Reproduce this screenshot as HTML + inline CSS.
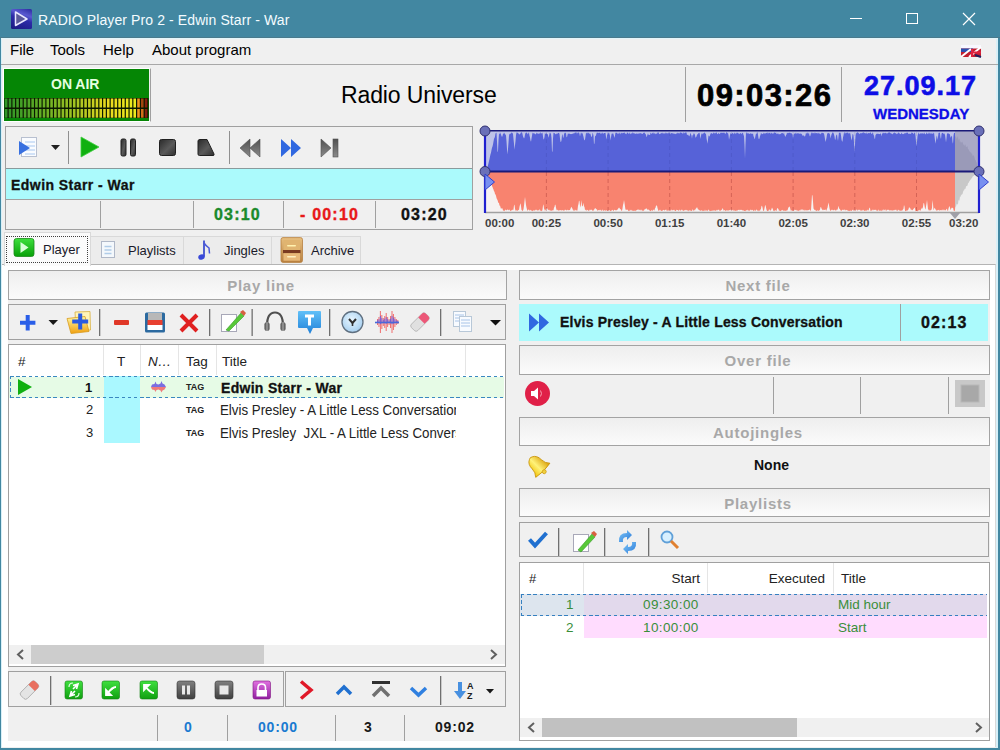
<!DOCTYPE html>
<html><head><meta charset="utf-8">
<style>
*{box-sizing:border-box;margin:0;padding:0}
html,body{width:1000px;height:750px;overflow:hidden;background:#f0f0f0;font-family:"Liberation Sans",sans-serif;color:#000}
.a{position:absolute}
.t{position:absolute;white-space:nowrap}
#title{left:0;top:0;width:1000px;height:38px;background:#4287a1}
#wl{left:0;top:38px;width:1px;height:712px;background:#4287a1}
#wr{left:998px;top:38px;width:2px;height:712px;background:#4287a1}
#wb{left:0;top:748px;width:1000px;height:2px;background:#4287a1}
.hdr{position:absolute;border:1px solid #a3a3a3;background:linear-gradient(#eeeeee,#fbfbfb);color:#a8a8a8;font-weight:bold;font-size:15px;letter-spacing:0.75px;text-align:center;padding-left:7px;padding-top:1px}
.box{position:absolute;border:1px solid #a0a0a0}
.vs{position:absolute;width:1px;background:#a0a0a0}
.hs{position:absolute;height:1px;background:#a0a0a0}
.dh{position:absolute;height:1.3px;background:repeating-linear-gradient(90deg,#3a88c0 0 3.5px,transparent 3.5px 6.2px)}
.dv{position:absolute;width:1.3px;background:repeating-linear-gradient(180deg,#3a88c0 0 3.5px,transparent 3.5px 6.2px)}
</style></head><body>
<div id="title" class="a"></div>
<div id="wl" class="a"></div><div id="wr" class="a"></div><div id="wb" class="a"></div>
<div class="a" style="left:1px;top:264px;width:995px;height:483px;background:#fff;border-top:1px solid #b4b4b4;border-right:1px solid #d8d8d8"></div>
<div class="a" style="left:8px;top:270px;width:982px;height:471px;background:#f0f0f0"></div>
<div class="a" style="left:996px;top:38px;width:2px;height:710px;background:#d8f0f8"></div>
<div class="a" style="left:1px;top:38px;width:1px;height:710px;background:#d8f0f8"></div>


<!-- title content -->
<div class="a" style="left:11px;top:9px;width:20.5px;height:19.5px;background:linear-gradient(20deg,#1a1a80 0%,#2c2ca8 50%,#5a5ad0 70%,#2a2aa0 100%);border-radius:1.5px"></div>
<svg class="a" style="left:11px;top:9px" width="21" height="20"><path d="M4.5 3 L16 10 L4.5 16.5 Z" fill="#5a5a9a" stroke="#e8e8ff" stroke-width="1.5" stroke-linejoin="round"/></svg>
<div class="t" style="left:38px;top:12px;font-size:14px;letter-spacing:0.1px;color:#f4fcff">RADIO Player Pro 2 - Edwin Starr - War</div>
<div class="a" style="left:0;top:37px;width:1000px;height:1px;background:#4a7a8c"></div><div class="a" style="left:1px;top:38px;width:997px;height:1px;background:#e2f6fb"></div>
<div class="a" style="left:850px;top:18px;width:12px;height:1px;background:#fff"></div>
<div class="a" style="left:906px;top:13px;width:12px;height:11px;border:1px solid #fff"></div>
<svg class="a" style="left:962px;top:12px" width="14" height="14"><path d="M1 1L13 13M13 1L1 13" stroke="#fff" stroke-width="1.2"/></svg>

<!-- menu -->
<div class="t" style="left:10px;top:41px;font-size:15px">File</div>
<div class="t" style="left:50px;top:41px;font-size:15px">Tools</div>
<div class="t" style="left:103px;top:41px;font-size:15px">Help</div>
<div class="t" style="left:152px;top:41px;font-size:15px">About program</div>
<div class="hs" style="left:1px;top:64px;width:997px;background:#a8a8a8"></div>
<svg class="a" style="left:960px;top:44px" width="22" height="14">
 <rect x="1" y="1" width="20" height="12" fill="#c02030"/>
 <rect x="1" y="1" width="20" height="3.5" fill="#f8f8ff"/>
 <rect x="1" y="4.5" width="12" height="3.5" fill="#2a50b0"/>
 <path d="M1 13 L11 5 M9 13 L21 3" stroke="#fff" stroke-width="2"/>
 <path d="M12 5 L12 13 M12 8.5 L21 8.5" stroke="#e02040" stroke-width="2"/>
 <path d="M15 11 L21 13" stroke="#202060" stroke-width="2"/>
 
</svg>


<!-- header row -->
<div class="a" style="left:3px;top:68px;width:148px;height:54px;border:1px solid #fff;border-right-color:#a0a0a0;border-bottom-color:#fff"></div>
<div class="a" style="left:4px;top:69px;width:145px;height:52px;background:#058605"></div>
<div class="t" style="left:51px;top:76px;font-size:14px;font-weight:bold;color:#e6ffe0">ON AIR</div>
<svg class="a" style="left:0;top:0" width="160" height="125"><rect x="4.5" y="98" width="144" height="20" fill="#0a1800"/><rect x="4.90" y="98.5" width="2.6" height="9" fill="rgb(50,150,40)"/><rect x="4.90" y="109" width="2.6" height="8.7" fill="rgb(50,150,40)"/><rect x="8.68" y="98.5" width="2.6" height="9" fill="rgb(53,152,39)"/><rect x="8.68" y="109" width="2.6" height="8.7" fill="rgb(53,152,39)"/><rect x="12.46" y="98.5" width="2.6" height="9" fill="rgb(58,155,39)"/><rect x="12.46" y="109" width="2.6" height="8.7" fill="rgb(58,155,39)"/><rect x="16.24" y="98.5" width="2.6" height="9" fill="rgb(63,157,39)"/><rect x="16.24" y="109" width="2.6" height="8.7" fill="rgb(63,157,39)"/><rect x="20.02" y="98.5" width="2.6" height="9" fill="rgb(68,160,38)"/><rect x="20.02" y="109" width="2.6" height="8.7" fill="rgb(68,160,38)"/><rect x="23.80" y="98.5" width="2.6" height="9" fill="rgb(74,162,38)"/><rect x="23.80" y="109" width="2.6" height="8.7" fill="rgb(74,162,38)"/><rect x="27.58" y="98.5" width="2.6" height="9" fill="rgb(80,165,38)"/><rect x="27.58" y="109" width="2.6" height="8.7" fill="rgb(80,165,38)"/><rect x="31.36" y="98.5" width="2.6" height="9" fill="rgb(86,167,37)"/><rect x="31.36" y="109" width="2.6" height="8.7" fill="rgb(86,167,37)"/><rect x="35.14" y="98.5" width="2.6" height="9" fill="rgb(92,170,37)"/><rect x="35.14" y="109" width="2.6" height="8.7" fill="rgb(92,170,37)"/><rect x="38.92" y="98.5" width="2.6" height="9" fill="rgb(99,172,37)"/><rect x="38.92" y="109" width="2.6" height="8.7" fill="rgb(99,172,37)"/><rect x="42.70" y="98.5" width="2.6" height="9" fill="rgb(105,175,37)"/><rect x="42.70" y="109" width="2.6" height="8.7" fill="rgb(105,175,37)"/><rect x="46.48" y="98.5" width="2.6" height="9" fill="rgb(112,177,36)"/><rect x="46.48" y="109" width="2.6" height="8.7" fill="rgb(112,177,36)"/><rect x="50.26" y="98.5" width="2.6" height="9" fill="rgb(119,180,36)"/><rect x="50.26" y="109" width="2.6" height="8.7" fill="rgb(119,180,36)"/><rect x="54.04" y="98.5" width="2.6" height="9" fill="rgb(126,182,36)"/><rect x="54.04" y="109" width="2.6" height="8.7" fill="rgb(126,182,36)"/><rect x="57.82" y="98.5" width="2.6" height="9" fill="rgb(133,185,35)"/><rect x="57.82" y="109" width="2.6" height="8.7" fill="rgb(133,185,35)"/><rect x="61.60" y="98.5" width="2.6" height="9" fill="rgb(140,187,35)"/><rect x="61.60" y="109" width="2.6" height="8.7" fill="rgb(140,187,35)"/><rect x="65.38" y="98.5" width="2.6" height="9" fill="rgb(147,190,35)"/><rect x="65.38" y="109" width="2.6" height="8.7" fill="rgb(147,190,35)"/><rect x="69.16" y="98.5" width="2.6" height="9" fill="rgb(155,192,35)"/><rect x="69.16" y="109" width="2.6" height="8.7" fill="rgb(155,192,35)"/><rect x="72.94" y="98.5" width="2.6" height="9" fill="rgb(162,195,34)"/><rect x="72.94" y="109" width="2.6" height="8.7" fill="rgb(162,195,34)"/><rect x="76.72" y="98.5" width="2.6" height="9" fill="rgb(170,197,34)"/><rect x="76.72" y="109" width="2.6" height="8.7" fill="rgb(170,197,34)"/><rect x="80.50" y="98.5" width="2.6" height="9" fill="rgb(177,200,34)"/><rect x="80.50" y="109" width="2.6" height="8.7" fill="rgb(177,200,34)"/><rect x="84.28" y="98.5" width="2.6" height="9" fill="rgb(185,202,33)"/><rect x="84.28" y="109" width="2.6" height="8.7" fill="rgb(185,202,33)"/><rect x="88.06" y="98.5" width="2.6" height="9" fill="rgb(193,205,33)"/><rect x="88.06" y="109" width="2.6" height="8.7" fill="rgb(193,205,33)"/><rect x="91.84" y="98.5" width="2.6" height="9" fill="rgb(201,207,33)"/><rect x="91.84" y="109" width="2.6" height="8.7" fill="rgb(201,207,33)"/><rect x="95.62" y="98.5" width="2.6" height="9" fill="rgb(209,210,32)"/><rect x="95.62" y="109" width="2.6" height="8.7" fill="rgb(209,210,32)"/><rect x="99.40" y="98.5" width="2.6" height="9" fill="rgb(217,212,32)"/><rect x="99.40" y="109" width="2.6" height="8.7" fill="rgb(217,212,32)"/><rect x="103.18" y="98.5" width="2.6" height="9" fill="rgb(225,215,32)"/><rect x="103.18" y="109" width="2.6" height="8.7" fill="rgb(225,215,32)"/><rect x="106.96" y="98.5" width="2.6" height="9" fill="rgb(233,217,32)"/><rect x="106.96" y="109" width="2.6" height="8.7" fill="rgb(233,217,32)"/><rect x="110.74" y="98.5" width="2.6" height="9" fill="rgb(235,220,31)"/><rect x="110.74" y="109" width="2.6" height="8.7" fill="rgb(235,220,31)"/><rect x="114.52" y="98.5" width="2.6" height="9" fill="rgb(235,222,31)"/><rect x="114.52" y="109" width="2.6" height="8.7" fill="rgb(235,222,31)"/><rect x="118.30" y="98.5" width="2.6" height="9" fill="rgb(235,225,31)"/><rect x="118.30" y="109" width="2.6" height="8.7" fill="rgb(235,225,31)"/><rect x="122.08" y="98.5" width="2.6" height="9" fill="rgb(235,227,30)"/><rect x="122.08" y="109" width="2.6" height="8.7" fill="rgb(235,227,30)"/><rect x="125.86" y="98.5" width="2.6" height="9" fill="rgb(235,230,30)"/><rect x="125.86" y="109" width="2.6" height="8.7" fill="rgb(235,230,30)"/><rect x="129.64" y="98.5" width="2.6" height="9" fill="rgb(235,232,30)"/><rect x="129.64" y="109" width="2.6" height="8.7" fill="rgb(235,232,30)"/><rect x="133.42" y="98.5" width="2.6" height="9" fill="rgb(235,235,30)"/><rect x="133.42" y="109" width="2.6" height="8.7" fill="rgb(235,235,30)"/><rect x="137.20" y="98.5" width="2.6" height="9" fill="rgb(240,150,30)"/><rect x="137.20" y="109" width="2.6" height="8.7" fill="rgb(240,150,30)"/><rect x="140.98" y="98.5" width="2.6" height="9" fill="rgb(160,70,15)"/><rect x="140.98" y="109" width="2.6" height="8.7" fill="rgb(210,110,25)"/><rect x="144.76" y="98.5" width="2.6" height="9" fill="rgb(130,30,10)"/><rect x="144.76" y="109" width="2.6" height="8.7" fill="rgb(130,30,10)"/></svg>
<div class="vs" style="left:685px;top:67px;height:55px"></div>
<div class="vs" style="left:841px;top:67px;height:55px"></div>
<div class="t" style="left:341px;top:82px;font-size:23px;letter-spacing:-0.12px">Radio Universe</div>
<div class="t" style="left:697px;top:78px;font-size:31px;font-weight:bold;letter-spacing:1.4px;-webkit-text-stroke:0.7px #000">09:03:26</div>
<div class="t" style="left:864px;top:71px;font-size:27px;font-weight:bold;color:#0d0de6;letter-spacing:1px;-webkit-text-stroke:0.6px #0d0de6">27.09.17</div>
<div class="t" style="left:873px;top:105px;font-size:15px;font-weight:bold;color:#0d0de6;-webkit-text-stroke:0.3px #0d0de6">WEDNESDAY</div>

<!-- player panel -->
<div class="box" style="left:5px;top:126px;width:468px;height:104px"></div>
<div class="a" style="left:6px;top:168px;width:466px;height:32px;background:#abfafc;border-top:1px solid #8a9a9c;border-bottom:1px solid #a0a0a0"></div>
<div class="t" style="left:11px;top:177px;font-size:14px;font-weight:bold;color:#111;letter-spacing:0.45px;-webkit-text-stroke:0.3px #111">Edwin Starr - War</div>
<div class="vs" style="left:100px;top:201px;height:27px"></div>
<div class="vs" style="left:193px;top:201px;height:27px"></div>
<div class="vs" style="left:283px;top:201px;height:27px"></div>
<div class="vs" style="left:375px;top:201px;height:27px"></div>
<div class="t" style="left:214px;top:206px;font-size:16px;font-weight:bold;color:#1a8a2a;letter-spacing:1.2px;-webkit-text-stroke:0.35px #1a8a2a">03:10</div>
<div class="t" style="left:300px;top:206px;font-size:16px;font-weight:bold;color:#e81818;letter-spacing:1.2px;-webkit-text-stroke:0.35px #e81818">- 00:10</div>
<div class="t" style="left:401px;top:206px;font-size:16px;font-weight:bold;color:#111;letter-spacing:1.2px;-webkit-text-stroke:0.35px #111">03:20</div>
<div class="vs" style="left:68px;top:131px;height:33px;background:#909090"></div>
<div class="vs" style="left:229px;top:131px;height:33px;background:#909090"></div>
<svg class="a" style="left:0;top:120px" width="480" height="50">
 <defs><linearGradient id="dk" x1="0" y1="0" x2="1" y2="1"><stop offset="0" stop-color="#2a2a2a"/><stop offset="0.55" stop-color="#5a5a5a"/><stop offset="1" stop-color="#303030"/></linearGradient>
 <linearGradient id="dg" x1="0" y1="0" x2="0" y2="1"><stop offset="0" stop-color="#505050"/><stop offset="1" stop-color="#8a8a8a"/></linearGradient></defs>
 <rect x="21.5" y="17.5" width="15" height="19" fill="#fafcff" stroke="#b8c0d0"/>
 <path d="M25 22h10M25 26h10M25 30h10M25 34h10" stroke="#a8c8f0" stroke-width="1"/>
 <path d="M19 21 L30 28 L19 35 Z" fill="#3870e0"/>
 <path d="M51 25 L60 25 L55.5 30 Z" fill="#202020"/>
 <path d="M81 17 L99 27 L81 37 Z" fill="#10b010" stroke="#40d040" stroke-width="0.8"/>
 <rect x="121" y="19" width="5" height="17" rx="1.5" fill="url(#dk)" stroke="#202020"/>
 <rect x="130.5" y="19" width="5" height="17" rx="1.5" fill="url(#dk)" stroke="#202020"/>
 <rect x="159.5" y="19.5" width="16" height="16" rx="2" fill="url(#dk)" stroke="#202020"/>
 <path d="M198 21 Q198 19.5 200 19.5 L207 19.5 L214 34 Q214.5 35.5 213 35.5 L199.5 35.5 Q198 35.5 198 34 Z" fill="url(#dk)" stroke="#202020"/>
 <path d="M240 28 L250 19 L250 37 Z M250 28 L260 19 L260 37 Z" fill="url(#dg)" stroke="#505050" stroke-width="0.6"/>
 <path d="M281 19 L291 28 L281 37 Z M291 19 L301 28 L291 37 Z" fill="#3068e0"/>
 <path d="M321 19 L331 28 L321 37 Z" fill="url(#dg)" stroke="#505050" stroke-width="0.6"/><rect x="333" y="19" width="5" height="18" fill="url(#dg)" stroke="#505050" stroke-width="0.6"/>
</svg>

<!-- waveform -->
<svg class="a" style="left:0;top:0" width="1000" height="235">
 <rect x="485" y="131" width="494" height="40.5" fill="#bec3e8"/>
 <rect x="485" y="171.5" width="494" height="41" fill="#f6f2f2"/>
 <path d="M485.5 171.5 L485.5 171.5 486.0 171.5 486.5 171.5 487.0 169.3 487.5 167.3 488.0 165.3 488.5 163.2 489.0 161.0 489.5 159.1 490.0 156.5 490.5 154.2 491.0 152.8 491.5 150.0 492.0 147.8 492.5 146.5 493.0 144.4 493.5 141.6 494.0 138.8 494.5 137.9 495.0 136.4 495.5 133.3 496.0 133.3 496.5 132.6 497.0 141.8 497.5 152.3 498.0 151.0 498.5 140.6 499.0 134.0 499.5 134.2 500.0 132.3 500.5 133.6 501.0 134.4 501.5 136.0 502.0 137.0 502.5 136.1 503.0 133.8 503.5 133.9 504.0 132.6 504.5 133.3 505.0 134.2 505.5 134.4 506.0 135.5 506.5 141.5 507.0 149.2 507.5 154.5 508.0 149.1 508.5 142.4 509.0 135.7 509.5 133.7 510.0 133.9 510.5 133.8 511.0 133.0 511.5 132.2 512.0 133.6 512.5 132.7 513.0 134.1 513.5 139.1 514.0 143.8 514.5 149.8 515.0 145.3 515.5 140.9 516.0 135.1 516.5 132.8 517.0 132.3 517.5 133.0 518.0 132.8 518.5 133.4 519.0 134.3 519.5 134.4 520.0 134.0 520.5 133.5 521.0 132.3 521.5 132.6 522.0 132.6 522.5 134.0 523.0 136.5 523.5 137.4 524.0 138.5 524.5 137.4 525.0 134.8 525.5 133.1 526.0 132.7 526.5 132.5 527.0 133.1 527.5 133.8 528.0 134.4 528.5 132.4 529.0 133.1 529.5 135.8 530.0 137.4 530.5 140.5 531.0 141.8 531.5 138.4 532.0 135.8 532.5 132.6 533.0 133.4 533.5 133.2 534.0 133.2 534.5 133.5 535.0 133.9 535.5 134.4 536.0 133.8 536.5 132.5 537.0 133.9 537.5 133.0 538.0 133.7 538.5 133.5 539.0 133.9 539.5 132.7 540.0 134.2 540.5 132.3 541.0 132.8 541.5 133.6 542.0 133.4 542.5 132.4 543.0 136.4 543.5 139.4 544.0 139.1 544.5 136.9 545.0 132.4 545.5 134.0 546.0 133.9 546.5 133.1 547.0 134.0 547.5 134.0 548.0 135.1 548.5 137.8 549.0 136.1 549.5 133.5 550.0 132.4 550.5 133.4 551.0 133.7 551.5 137.9 552.0 151.4 552.5 151.8 553.0 138.6 553.5 132.8 554.0 133.0 554.5 133.0 555.0 133.8 555.5 134.2 556.0 134.2 556.5 134.0 557.0 132.9 557.5 134.3 558.0 132.7 558.5 133.0 559.0 133.1 559.5 134.0 560.0 138.5 560.5 141.8 561.0 141.9 561.5 140.3 562.0 135.2 562.5 134.1 563.0 137.7 563.5 137.5 564.0 134.3 564.5 132.4 565.0 133.8 565.5 132.4 566.0 132.9 566.5 137.1 567.0 137.3 567.5 134.9 568.0 133.1 568.5 134.3 569.0 133.3 569.5 133.8 570.0 134.2 570.5 134.0 571.0 134.1 571.5 134.0 572.0 134.3 572.5 133.4 573.0 134.0 573.5 133.1 574.0 133.8 574.5 133.0 575.0 132.6 575.5 132.8 576.0 132.3 576.5 132.5 577.0 133.9 577.5 132.3 578.0 133.5 578.5 132.3 579.0 132.6 579.5 134.1 580.0 136.6 580.5 134.0 581.0 132.6 581.5 132.9 582.0 134.0 582.5 132.8 583.0 135.0 583.5 136.8 584.0 139.3 584.5 140.4 585.0 139.4 585.5 136.2 586.0 133.0 586.5 133.6 587.0 132.2 587.5 133.0 588.0 133.8 588.5 132.5 589.0 132.9 589.5 134.1 590.0 133.6 590.5 134.1 591.0 136.0 591.5 136.9 592.0 136.6 592.5 132.8 593.0 133.8 593.5 135.8 594.0 144.2 594.5 143.2 595.0 136.0 595.5 136.2 596.0 134.9 596.5 133.4 597.0 132.5 597.5 132.9 598.0 132.4 598.5 133.2 599.0 133.0 599.5 132.4 600.0 133.2 600.5 134.0 601.0 132.2 601.5 133.8 602.0 133.4 602.5 132.2 603.0 134.0 603.5 133.6 604.0 133.0 604.5 132.9 605.0 133.1 605.5 132.8 606.0 137.1 606.5 139.5 607.0 135.7 607.5 134.0 608.0 132.5 608.5 133.7 609.0 132.6 609.5 134.0 610.0 135.7 610.5 140.5 611.0 137.3 611.5 134.2 612.0 133.3 612.5 133.9 613.0 133.0 613.5 134.3 614.0 136.0 614.5 138.0 615.0 135.6 615.5 132.4 616.0 133.0 616.5 132.4 617.0 133.3 617.5 134.0 618.0 132.5 618.5 134.2 619.0 133.0 619.5 132.5 620.0 134.4 620.5 133.8 621.0 132.6 621.5 133.6 622.0 132.4 622.5 133.5 623.0 132.9 623.5 133.0 624.0 132.5 624.5 132.5 625.0 133.4 625.5 133.4 626.0 134.2 626.5 134.0 627.0 132.5 627.5 132.8 628.0 132.7 628.5 134.0 629.0 133.4 629.5 132.3 630.0 134.4 630.5 133.6 631.0 133.7 631.5 133.0 632.0 134.0 632.5 132.6 633.0 132.5 633.5 133.5 634.0 133.3 634.5 133.4 635.0 133.6 635.5 133.7 636.0 134.3 636.5 133.2 637.0 133.6 637.5 133.9 638.0 133.3 638.5 134.0 639.0 133.1 639.5 133.4 640.0 133.4 640.5 133.2 641.0 132.9 641.5 133.8 642.0 133.8 642.5 133.9 643.0 133.5 643.5 132.5 644.0 133.3 644.5 132.3 645.0 133.4 645.5 133.9 646.0 134.7 646.5 137.3 647.0 136.2 647.5 134.6 648.0 133.2 648.5 134.8 649.0 135.1 649.5 134.7 650.0 135.2 650.5 132.7 651.0 132.9 651.5 134.2 652.0 133.1 652.5 133.5 653.0 132.3 653.5 132.9 654.0 134.3 654.5 133.2 655.0 132.8 655.5 134.2 656.0 134.0 656.5 133.2 657.0 134.1 657.5 132.6 658.0 132.6 658.5 132.3 659.0 133.8 659.5 134.2 660.0 133.8 660.5 133.7 661.0 133.2 661.5 132.7 662.0 133.8 662.5 132.6 663.0 133.7 663.5 133.0 664.0 134.1 664.5 132.7 665.0 134.2 665.5 132.8 666.0 132.4 666.5 133.2 667.0 133.4 667.5 133.5 668.0 132.8 668.5 132.4 669.0 133.9 669.5 132.8 670.0 132.6 670.5 134.4 671.0 133.2 671.5 133.0 672.0 133.3 672.5 133.4 673.0 133.0 673.5 133.9 674.0 133.3 674.5 133.7 675.0 134.3 675.5 133.9 676.0 133.5 676.5 133.2 677.0 133.9 677.5 132.7 678.0 132.7 678.5 133.3 679.0 133.5 679.5 133.5 680.0 132.6 680.5 132.2 681.0 133.2 681.5 132.8 682.0 132.4 682.5 133.5 683.0 133.9 683.5 132.5 684.0 132.3 684.5 133.6 685.0 132.8 685.5 132.4 686.0 132.6 686.5 132.6 687.0 135.1 687.5 134.9 688.0 134.3 688.5 135.8 689.0 135.5 689.5 136.5 690.0 134.5 690.5 132.8 691.0 134.2 691.5 135.5 692.0 138.7 692.5 134.8 693.0 135.7 693.5 133.5 694.0 133.4 694.5 133.8 695.0 135.0 695.5 137.9 696.0 136.8 696.5 136.7 697.0 134.5 697.5 134.2 698.0 134.2 698.5 133.1 699.0 133.0 699.5 132.7 700.0 135.3 700.5 139.0 701.0 136.1 701.5 132.9 702.0 134.4 702.5 134.1 703.0 133.0 703.5 133.7 704.0 132.8 704.5 132.6 705.0 133.1 705.5 133.8 706.0 133.9 706.5 138.2 707.0 140.9 707.5 143.7 708.0 139.3 708.5 135.8 709.0 135.4 709.5 136.7 710.0 135.4 710.5 133.5 711.0 133.6 711.5 132.9 712.0 133.4 712.5 133.8 713.0 133.8 713.5 132.5 714.0 132.8 714.5 133.1 715.0 134.1 715.5 132.8 716.0 132.7 716.5 132.3 717.0 133.4 717.5 134.3 718.0 133.7 718.5 132.7 719.0 133.7 719.5 134.1 720.0 133.6 720.5 133.1 721.0 132.3 721.5 132.9 722.0 132.8 722.5 133.1 723.0 132.6 723.5 132.7 724.0 133.0 724.5 132.5 725.0 133.7 725.5 133.7 726.0 133.1 726.5 132.3 727.0 132.3 727.5 133.5 728.0 132.9 728.5 135.0 729.0 139.7 729.5 137.8 730.0 134.8 730.5 133.6 731.0 133.0 731.5 134.3 732.0 133.6 732.5 133.1 733.0 132.8 733.5 134.1 734.0 134.2 734.5 132.5 735.0 132.9 735.5 134.3 736.0 132.6 736.5 133.7 737.0 132.2 737.5 133.1 738.0 133.3 738.5 133.4 739.0 133.4 739.5 134.3 740.0 133.0 740.5 132.9 741.0 133.7 741.5 134.3 742.0 132.6 742.5 133.3 743.0 133.0 743.5 134.9 744.0 136.1 744.5 144.8 745.0 158.5 745.5 143.3 746.0 132.4 746.5 132.4 747.0 133.9 747.5 132.6 748.0 134.1 748.5 132.8 749.0 134.0 749.5 133.8 750.0 133.8 750.5 132.9 751.0 134.1 751.5 133.4 752.0 133.8 752.5 134.0 753.0 133.2 753.5 136.3 754.0 137.1 754.5 139.2 755.0 138.2 755.5 135.7 756.0 133.6 756.5 134.3 757.0 132.3 757.5 132.5 758.0 134.8 758.5 138.4 759.0 139.1 759.5 138.6 760.0 136.1 760.5 134.9 761.0 132.8 761.5 133.6 762.0 134.4 762.5 133.7 763.0 134.0 763.5 132.6 764.0 134.3 764.5 133.3 765.0 132.9 765.5 133.4 766.0 133.6 766.5 132.7 767.0 133.0 767.5 132.3 768.0 134.2 768.5 132.4 769.0 133.3 769.5 132.6 770.0 133.3 770.5 134.0 771.0 132.3 771.5 133.6 772.0 132.8 772.5 134.1 773.0 133.2 773.5 133.8 774.0 132.3 774.5 132.5 775.0 133.0 775.5 132.9 776.0 132.2 776.5 134.3 777.0 133.4 777.5 133.9 778.0 133.1 778.5 134.0 779.0 134.4 779.5 134.3 780.0 133.8 780.5 134.2 781.0 133.5 781.5 133.1 782.0 133.6 782.5 133.0 783.0 133.0 783.5 134.2 784.0 132.4 784.5 135.0 785.0 136.1 785.5 137.1 786.0 135.2 786.5 134.6 787.0 132.7 787.5 133.1 788.0 133.4 788.5 132.7 789.0 132.9 789.5 132.4 790.0 133.1 790.5 132.7 791.0 133.8 791.5 132.8 792.0 134.3 792.5 134.2 793.0 137.9 793.5 135.3 794.0 133.6 794.5 133.6 795.0 134.1 795.5 133.3 796.0 132.5 796.5 133.7 797.0 133.7 797.5 133.0 798.0 133.5 798.5 133.3 799.0 133.6 799.5 133.5 800.0 134.2 800.5 133.2 801.0 133.8 801.5 133.8 802.0 134.6 802.5 135.5 803.0 135.9 803.5 135.2 804.0 135.5 804.5 136.5 805.0 136.6 805.5 135.1 806.0 132.8 806.5 133.2 807.0 134.1 807.5 132.8 808.0 132.4 808.5 133.9 809.0 132.7 809.5 135.4 810.0 136.4 810.5 135.3 811.0 133.0 811.5 132.3 812.0 134.1 812.5 132.5 813.0 133.1 813.5 133.6 814.0 132.4 814.5 132.7 815.0 134.1 815.5 132.6 816.0 133.1 816.5 132.9 817.0 133.6 817.5 133.5 818.0 132.6 818.5 133.7 819.0 132.5 819.5 134.3 820.0 133.0 820.5 134.4 821.0 133.8 821.5 132.9 822.0 132.5 822.5 133.1 823.0 133.1 823.5 133.3 824.0 133.5 824.5 136.1 825.0 139.0 825.5 141.9 826.0 140.0 826.5 137.7 827.0 134.4 827.5 133.2 828.0 133.1 828.5 133.2 829.0 132.8 829.5 133.7 830.0 134.5 830.5 138.6 831.0 136.6 831.5 134.4 832.0 133.5 832.5 132.4 833.0 132.4 833.5 133.0 834.0 134.4 834.5 136.5 835.0 139.8 835.5 139.4 836.0 135.8 836.5 134.9 837.0 134.3 837.5 138.2 838.0 141.0 838.5 136.6 839.0 132.3 839.5 133.1 840.0 132.7 840.5 132.7 841.0 135.2 841.5 139.6 842.0 141.4 842.5 141.4 843.0 137.5 843.5 135.4 844.0 132.5 844.5 132.2 845.0 134.3 845.5 132.3 846.0 133.4 846.5 132.4 847.0 132.9 847.5 132.5 848.0 132.5 848.5 133.3 849.0 133.9 849.5 133.1 850.0 132.7 850.5 134.4 851.0 137.8 851.5 140.4 852.0 138.2 852.5 134.3 853.0 134.1 853.5 135.4 854.0 142.6 854.5 151.7 855.0 144.3 855.5 136.2 856.0 132.9 856.5 133.6 857.0 132.3 857.5 132.4 858.0 132.4 858.5 132.9 859.0 133.6 859.5 134.3 860.0 133.3 860.5 133.1 861.0 133.8 861.5 133.0 862.0 133.2 862.5 133.1 863.0 132.3 863.5 132.3 864.0 133.4 864.5 132.7 865.0 133.0 865.5 133.3 866.0 133.8 866.5 132.2 867.0 134.3 867.5 133.5 868.0 133.0 868.5 133.0 869.0 133.5 869.5 132.9 870.0 133.3 870.5 132.3 871.0 132.8 871.5 134.0 872.0 134.1 872.5 132.8 873.0 132.4 873.5 135.1 874.0 135.6 874.5 138.6 875.0 138.9 875.5 135.0 876.0 134.6 876.5 133.6 877.0 134.3 877.5 133.5 878.0 133.8 878.5 133.7 879.0 134.2 879.5 133.9 880.0 133.9 880.5 133.2 881.0 133.9 881.5 136.5 882.0 133.5 882.5 133.7 883.0 132.4 883.5 132.9 884.0 133.4 884.5 132.7 885.0 133.4 885.5 132.5 886.0 133.2 886.5 133.2 887.0 133.7 887.5 133.3 888.0 133.1 888.5 132.4 889.0 132.6 889.5 132.6 890.0 132.6 890.5 133.5 891.0 133.1 891.5 134.1 892.0 133.5 892.5 134.4 893.0 133.7 893.5 132.8 894.0 133.5 894.5 132.3 895.0 133.0 895.5 133.2 896.0 133.4 896.5 134.2 897.0 133.3 897.5 133.9 898.0 132.9 898.5 132.3 899.0 133.4 899.5 132.9 900.0 134.3 900.5 134.0 901.0 133.9 901.5 132.6 902.0 133.5 902.5 133.9 903.0 134.2 903.5 133.7 904.0 134.3 904.5 132.8 905.0 133.8 905.5 132.7 906.0 133.4 906.5 132.8 907.0 132.5 907.5 132.8 908.0 132.8 908.5 134.1 909.0 134.1 909.5 133.5 910.0 133.8 910.5 133.7 911.0 133.9 911.5 132.3 912.0 133.0 912.5 132.7 913.0 133.0 913.5 134.3 914.0 133.4 914.5 132.7 915.0 132.4 915.5 135.8 916.0 141.6 916.5 146.1 917.0 141.7 917.5 136.2 918.0 133.7 918.5 132.3 919.0 134.4 919.5 134.1 920.0 133.3 920.5 133.4 921.0 133.4 921.5 133.3 922.0 133.8 922.5 133.3 923.0 133.3 923.5 134.3 924.0 132.5 924.5 132.9 925.0 134.3 925.5 134.3 926.0 134.1 926.5 132.2 927.0 133.5 927.5 133.5 928.0 134.3 928.5 133.3 929.0 132.3 929.5 134.1 930.0 132.3 930.5 134.0 931.0 133.3 931.5 133.9 932.0 132.2 932.5 133.9 933.0 134.0 933.5 132.9 934.0 132.6 934.5 136.4 935.0 140.2 935.5 143.8 936.0 140.2 936.5 136.8 937.0 135.6 937.5 139.9 938.0 137.0 938.5 133.1 939.0 132.8 939.5 132.6 940.0 133.2 940.5 137.4 941.0 138.9 941.5 134.0 942.0 132.7 942.5 133.1 943.0 133.0 943.5 134.2 944.0 133.1 944.5 133.9 945.0 134.7 945.5 138.6 946.0 142.4 946.5 138.3 947.0 133.5 947.5 133.0 948.0 134.2 948.5 132.7 949.0 134.3 949.5 133.8 950.0 134.8 950.5 137.9 951.0 136.4 951.5 136.6 952.0 135.6 952.5 141.9 953.0 143.7 953.5 135.7 954.0 133.0 954.5 132.9 955.0 132.5 L955.0 171.5 Z" fill="#5662d8"/>
 <path d="M485.5 171.5 L485.5 171.5 486.0 171.5 486.5 171.5 487.0 172.8 487.5 174.1 488.0 175.4 488.5 176.7 489.0 177.9 489.5 179.3 490.0 180.4 490.5 181.6 491.0 183.4 491.5 184.3 492.0 186.0 492.5 187.1 493.0 188.6 493.5 189.4 494.0 191.2 494.5 191.8 495.0 193.9 495.5 194.5 496.0 195.8 496.5 197.9 497.0 199.3 497.5 199.9 498.0 201.8 498.5 203.0 499.0 203.0 499.5 205.8 500.0 205.6 500.5 207.2 501.0 208.9 501.5 208.3 502.0 208.3 502.5 208.6 503.0 210.4 503.5 210.5 504.0 211.0 504.5 211.3 505.0 209.7 505.5 209.6 506.0 210.5 506.5 210.3 507.0 209.7 507.5 209.5 508.0 209.7 508.5 210.5 509.0 209.5 509.5 209.8 510.0 210.5 510.5 211.2 511.0 210.4 511.5 210.6 512.0 210.1 512.5 209.4 513.0 210.6 513.5 209.2 514.0 205.5 514.5 204.6 515.0 208.4 515.5 211.3 516.0 209.8 516.5 210.5 517.0 210.9 517.5 211.1 518.0 209.5 518.5 210.3 519.0 210.0 519.5 206.8 520.0 204.8 520.5 203.2 521.0 206.0 521.5 209.9 522.0 210.3 522.5 211.2 523.0 210.5 523.5 209.2 524.0 205.8 524.5 201.3 525.0 197.0 525.5 201.0 526.0 204.9 526.5 207.5 527.0 209.5 527.5 211.2 528.0 209.4 528.5 209.5 529.0 210.3 529.5 210.8 530.0 209.4 530.5 210.4 531.0 209.7 531.5 211.1 532.0 210.4 532.5 211.2 533.0 211.1 533.5 210.0 534.0 210.8 534.5 210.5 535.0 210.2 535.5 209.4 536.0 210.8 536.5 209.5 537.0 210.1 537.5 210.8 538.0 210.2 538.5 210.0 539.0 210.9 539.5 209.3 540.0 209.5 540.5 211.2 541.0 210.4 541.5 211.1 542.0 211.2 542.5 209.6 543.0 205.7 543.5 204.2 544.0 208.5 544.5 209.6 545.0 211.1 545.5 209.7 546.0 209.4 546.5 208.2 547.0 208.5 547.5 208.4 548.0 210.2 548.5 209.5 549.0 210.6 549.5 209.5 550.0 211.1 550.5 210.3 551.0 210.7 551.5 211.1 552.0 210.0 552.5 210.7 553.0 209.9 553.5 210.6 554.0 207.6 554.5 207.1 555.0 204.4 555.5 204.9 556.0 207.7 556.5 209.7 557.0 210.5 557.5 209.5 558.0 210.6 558.5 210.6 559.0 210.5 559.5 210.2 560.0 210.2 560.5 210.2 561.0 209.8 561.5 210.7 562.0 210.3 562.5 210.2 563.0 210.0 563.5 211.2 564.0 209.7 564.5 211.1 565.0 209.5 565.5 210.0 566.0 209.8 566.5 210.8 567.0 209.8 567.5 209.8 568.0 210.6 568.5 210.0 569.0 210.2 569.5 209.9 570.0 210.1 570.5 208.7 571.0 207.6 571.5 206.8 572.0 208.1 572.5 208.8 573.0 210.2 573.5 211.0 574.0 209.3 574.5 211.0 575.0 210.5 575.5 209.4 576.0 210.7 576.5 210.0 577.0 210.9 577.5 209.9 578.0 205.7 578.5 204.0 579.0 200.6 579.5 201.3 580.0 205.5 580.5 207.6 581.0 204.0 581.5 199.9 582.0 206.2 582.5 206.3 583.0 205.3 583.5 202.8 584.0 206.3 584.5 206.9 585.0 210.1 585.5 210.3 586.0 209.3 586.5 210.8 587.0 210.4 587.5 209.7 588.0 210.1 588.5 211.0 589.0 210.8 589.5 210.3 590.0 209.3 590.5 210.2 591.0 209.8 591.5 209.7 592.0 209.7 592.5 210.8 593.0 211.1 593.5 210.4 594.0 209.5 594.5 209.2 595.0 208.0 595.5 208.3 596.0 209.0 596.5 209.2 597.0 209.5 597.5 210.7 598.0 210.7 598.5 209.9 599.0 209.9 599.5 210.5 600.0 209.4 600.5 210.0 601.0 210.5 601.5 210.8 602.0 210.4 602.5 209.3 603.0 210.9 603.5 210.7 604.0 210.2 604.5 210.6 605.0 210.0 605.5 210.9 606.0 210.6 606.5 210.2 607.0 210.6 607.5 211.1 608.0 211.1 608.5 209.9 609.0 210.5 609.5 210.1 610.0 210.8 610.5 211.1 611.0 211.2 611.5 210.4 612.0 210.0 612.5 209.7 613.0 210.6 613.5 211.3 614.0 209.9 614.5 209.7 615.0 210.1 615.5 210.6 616.0 210.0 616.5 210.5 617.0 209.7 617.5 209.8 618.0 208.7 618.5 208.3 619.0 207.6 619.5 207.9 620.0 209.1 620.5 209.3 621.0 209.4 621.5 210.9 622.0 210.8 622.5 208.4 623.0 205.1 623.5 203.2 624.0 200.0 624.5 203.0 625.0 206.6 625.5 210.0 626.0 209.3 626.5 210.1 627.0 209.7 627.5 209.5 628.0 210.2 628.5 210.9 629.0 211.1 629.5 210.9 630.0 209.4 630.5 210.7 631.0 209.8 631.5 210.1 632.0 211.3 632.5 210.4 633.0 210.5 633.5 211.0 634.0 210.8 634.5 210.6 635.0 211.2 635.5 211.0 636.0 210.1 636.5 210.5 637.0 209.9 637.5 209.8 638.0 209.3 638.5 209.6 639.0 210.4 639.5 209.5 640.0 210.2 640.5 209.5 641.0 211.2 641.5 209.5 642.0 210.1 642.5 210.7 643.0 211.2 643.5 210.4 644.0 210.5 644.5 209.3 645.0 209.6 645.5 208.6 646.0 209.2 646.5 208.1 647.0 208.9 647.5 209.7 648.0 209.8 648.5 209.5 649.0 209.7 649.5 210.2 650.0 211.3 650.5 210.7 651.0 211.2 651.5 209.7 652.0 210.6 652.5 211.2 653.0 209.5 653.5 210.3 654.0 209.3 654.5 210.9 655.0 208.2 655.5 207.8 656.0 205.7 656.5 205.4 657.0 205.5 657.5 208.1 658.0 209.4 658.5 211.1 659.0 210.7 659.5 209.6 660.0 211.0 660.5 209.4 661.0 211.1 661.5 210.7 662.0 210.9 662.5 210.8 663.0 209.7 663.5 210.0 664.0 210.1 664.5 210.7 665.0 210.0 665.5 210.0 666.0 209.3 666.5 210.2 667.0 211.2 667.5 210.7 668.0 209.7 668.5 210.7 669.0 210.8 669.5 210.2 670.0 209.5 670.5 211.2 671.0 209.8 671.5 209.4 672.0 210.9 672.5 210.0 673.0 210.0 673.5 210.3 674.0 209.6 674.5 210.3 675.0 211.0 675.5 211.0 676.0 210.8 676.5 209.8 677.0 209.7 677.5 210.3 678.0 210.1 678.5 211.2 679.0 209.9 679.5 209.6 680.0 211.0 680.5 210.3 681.0 210.4 681.5 209.7 682.0 209.5 682.5 210.2 683.0 210.8 683.5 210.7 684.0 210.7 684.5 210.2 685.0 210.1 685.5 209.7 686.0 210.8 686.5 209.9 687.0 209.7 687.5 210.5 688.0 210.9 688.5 211.2 689.0 209.8 689.5 211.0 690.0 209.8 690.5 210.8 691.0 211.0 691.5 210.7 692.0 211.1 692.5 209.3 693.0 209.8 693.5 210.8 694.0 210.8 694.5 209.4 695.0 210.6 695.5 209.0 696.0 208.4 696.5 208.0 697.0 206.9 697.5 208.2 698.0 209.5 698.5 209.6 699.0 209.7 699.5 210.6 700.0 210.2 700.5 210.9 701.0 210.4 701.5 210.4 702.0 209.9 702.5 210.9 703.0 211.2 703.5 210.6 704.0 211.3 704.5 210.8 705.0 209.5 705.5 210.8 706.0 211.0 706.5 210.6 707.0 209.9 707.5 211.3 708.0 210.5 708.5 209.5 709.0 209.8 709.5 211.2 710.0 210.8 710.5 211.0 711.0 211.2 711.5 210.5 712.0 211.0 712.5 210.8 713.0 210.0 713.5 210.9 714.0 209.9 714.5 210.5 715.0 210.8 715.5 210.6 716.0 211.2 716.5 210.0 717.0 209.7 717.5 210.7 718.0 209.5 718.5 209.9 719.0 209.4 719.5 210.8 720.0 211.1 720.5 210.5 721.0 210.5 721.5 209.8 722.0 209.7 722.5 208.2 723.0 208.6 723.5 210.6 724.0 210.5 724.5 210.1 725.0 210.2 725.5 211.3 726.0 210.6 726.5 210.5 727.0 210.3 727.5 210.4 728.0 210.8 728.5 210.6 729.0 210.2 729.5 210.0 730.0 210.4 730.5 209.4 731.0 210.1 731.5 209.8 732.0 210.1 732.5 210.5 733.0 209.6 733.5 210.5 734.0 211.2 734.5 210.3 735.0 210.6 735.5 211.0 736.0 210.8 736.5 210.8 737.0 210.2 737.5 210.8 738.0 210.0 738.5 210.1 739.0 209.6 739.5 210.6 740.0 209.5 740.5 209.9 741.0 209.9 741.5 209.7 742.0 210.1 742.5 210.2 743.0 210.7 743.5 210.2 744.0 210.8 744.5 210.9 745.0 211.0 745.5 211.2 746.0 209.9 746.5 210.4 747.0 210.3 747.5 209.6 748.0 211.2 748.5 210.3 749.0 210.5 749.5 210.8 750.0 210.6 750.5 209.8 751.0 209.6 751.5 210.5 752.0 210.1 752.5 209.7 753.0 210.5 753.5 210.8 754.0 211.3 754.5 209.4 755.0 211.0 755.5 210.5 756.0 210.5 756.5 209.3 757.0 209.9 757.5 211.2 758.0 209.8 758.5 211.1 759.0 211.2 759.5 210.3 760.0 210.7 760.5 209.6 761.0 208.8 761.5 206.0 762.0 205.8 762.5 207.5 763.0 210.3 763.5 211.1 764.0 210.8 764.5 208.3 765.0 205.8 765.5 205.1 766.0 207.6 766.5 209.8 767.0 210.8 767.5 211.2 768.0 210.7 768.5 210.9 769.0 209.3 769.5 209.6 770.0 210.5 770.5 210.5 771.0 210.2 771.5 209.1 772.0 207.5 772.5 208.5 773.0 209.6 773.5 210.9 774.0 211.0 774.5 211.2 775.0 209.8 775.5 210.3 776.0 210.9 776.5 211.0 777.0 208.7 777.5 208.1 778.0 208.4 778.5 209.2 779.0 211.1 779.5 210.5 780.0 210.8 780.5 211.3 781.0 210.8 781.5 210.6 782.0 209.7 782.5 210.0 783.0 210.7 783.5 210.7 784.0 210.6 784.5 210.9 785.0 210.2 785.5 210.9 786.0 211.0 786.5 210.4 787.0 210.3 787.5 210.6 788.0 208.4 788.5 207.5 789.0 206.8 789.5 206.6 790.0 207.6 790.5 209.7 791.0 210.9 791.5 209.9 792.0 210.7 792.5 210.6 793.0 211.0 793.5 210.5 794.0 210.9 794.5 209.5 795.0 210.0 795.5 210.2 796.0 209.6 796.5 210.4 797.0 210.5 797.5 210.8 798.0 210.2 798.5 211.2 799.0 210.4 799.5 210.1 800.0 211.0 800.5 209.3 801.0 210.7 801.5 209.3 802.0 209.6 802.5 209.3 803.0 210.8 803.5 210.0 804.0 209.6 804.5 210.3 805.0 211.2 805.5 209.9 806.0 209.7 806.5 210.2 807.0 210.9 807.5 210.0 808.0 210.2 808.5 210.3 809.0 209.7 809.5 209.8 810.0 209.5 810.5 211.0 811.0 210.6 811.5 202.9 812.0 194.8 812.5 195.8 813.0 201.6 813.5 208.6 814.0 209.3 814.5 210.0 815.0 209.8 815.5 210.0 816.0 211.3 816.5 210.7 817.0 210.7 817.5 209.9 818.0 211.0 818.5 210.4 819.0 211.1 819.5 210.1 820.0 209.8 820.5 207.3 821.0 207.1 821.5 208.4 822.0 209.4 822.5 209.7 823.0 210.4 823.5 209.4 824.0 209.9 824.5 210.1 825.0 209.6 825.5 209.6 826.0 210.4 826.5 210.5 827.0 208.8 827.5 207.7 828.0 205.1 828.5 202.5 829.0 205.2 829.5 208.3 830.0 210.6 830.5 210.8 831.0 210.6 831.5 209.6 832.0 210.2 832.5 209.5 833.0 210.6 833.5 209.9 834.0 210.6 834.5 209.4 835.0 210.0 835.5 210.6 836.0 210.7 836.5 210.1 837.0 209.3 837.5 209.9 838.0 208.0 838.5 205.8 839.0 207.9 839.5 208.9 840.0 209.3 840.5 210.6 841.0 210.5 841.5 211.1 842.0 210.0 842.5 209.8 843.0 209.7 843.5 209.7 844.0 210.4 844.5 209.6 845.0 209.5 845.5 210.6 846.0 210.2 846.5 209.7 847.0 210.3 847.5 210.2 848.0 211.1 848.5 210.7 849.0 210.8 849.5 211.2 850.0 210.4 850.5 210.4 851.0 211.1 851.5 211.0 852.0 210.3 852.5 210.1 853.0 209.4 853.5 211.3 854.0 209.7 854.5 209.9 855.0 210.2 855.5 211.1 856.0 209.4 856.5 209.6 857.0 210.5 857.5 210.8 858.0 209.5 858.5 210.3 859.0 209.5 859.5 210.2 860.0 209.5 860.5 210.7 861.0 210.8 861.5 210.4 862.0 210.6 862.5 210.4 863.0 209.6 863.5 210.2 864.0 210.5 864.5 211.1 865.0 210.7 865.5 210.8 866.0 210.3 866.5 210.5 867.0 211.3 867.5 209.4 868.0 210.1 868.5 210.7 869.0 208.9 869.5 207.4 870.0 208.3 870.5 211.1 871.0 210.8 871.5 210.4 872.0 210.5 872.5 209.9 873.0 209.3 873.5 210.6 874.0 209.7 874.5 210.0 875.0 209.8 875.5 210.1 876.0 209.4 876.5 211.3 877.0 209.8 877.5 211.3 878.0 210.5 878.5 209.3 879.0 211.2 879.5 210.4 880.0 210.5 880.5 210.4 881.0 210.7 881.5 211.2 882.0 209.6 882.5 210.2 883.0 211.1 883.5 209.4 884.0 209.5 884.5 210.5 885.0 209.6 885.5 209.6 886.0 211.2 886.5 210.5 887.0 209.4 887.5 209.9 888.0 209.7 888.5 209.8 889.0 210.1 889.5 210.6 890.0 210.6 890.5 210.3 891.0 210.2 891.5 210.6 892.0 210.3 892.5 210.6 893.0 210.8 893.5 209.8 894.0 210.8 894.5 209.7 895.0 209.9 895.5 210.1 896.0 209.3 896.5 210.4 897.0 210.8 897.5 211.1 898.0 209.6 898.5 209.9 899.0 210.2 899.5 211.0 900.0 209.8 900.5 211.1 901.0 210.9 901.5 210.2 902.0 211.1 902.5 210.1 903.0 209.5 903.5 208.7 904.0 205.0 904.5 206.5 905.0 210.8 905.5 211.3 906.0 210.8 906.5 210.8 907.0 210.3 907.5 210.7 908.0 209.7 908.5 209.6 909.0 207.3 909.5 207.4 910.0 208.3 910.5 208.4 911.0 210.6 911.5 209.4 912.0 209.7 912.5 210.4 913.0 209.5 913.5 209.0 914.0 208.3 914.5 207.6 915.0 208.6 915.5 211.2 916.0 211.1 916.5 211.1 917.0 210.7 917.5 211.2 918.0 211.2 918.5 210.2 919.0 209.9 919.5 209.7 920.0 211.1 920.5 210.5 921.0 209.3 921.5 208.8 922.0 207.5 922.5 209.1 923.0 206.8 923.5 203.3 924.0 203.1 924.5 205.7 925.0 208.6 925.5 209.4 926.0 206.6 926.5 203.5 927.0 200.0 927.5 204.2 928.0 209.2 928.5 209.4 929.0 211.1 929.5 209.4 930.0 211.2 930.5 209.9 931.0 210.1 931.5 209.7 932.0 207.8 932.5 199.9 933.0 204.1 933.5 210.3 934.0 209.2 934.5 207.7 935.0 208.2 935.5 209.8 936.0 209.5 936.5 211.0 937.0 210.3 937.5 210.6 938.0 210.0 938.5 210.3 939.0 209.5 939.5 210.8 940.0 210.6 940.5 210.0 941.0 210.2 941.5 209.8 942.0 210.9 942.5 209.3 943.0 210.6 943.5 209.3 944.0 211.0 944.5 209.7 945.0 209.7 945.5 210.7 946.0 209.7 946.5 208.7 947.0 209.0 947.5 210.7 948.0 211.0 948.5 208.5 949.0 207.0 949.5 205.9 950.0 207.7 950.5 210.2 951.0 209.0 951.5 207.9 952.0 207.5 952.5 208.2 953.0 207.5 953.5 210.0 954.0 211.2 954.5 210.9 955.0 210.2 L955.0 171.5 Z" fill="#f8836f"/>
 <line x1="546.4" y1="132" x2="546.4" y2="171" stroke="rgba(20,20,90,0.1)" stroke-width="1" stroke-dasharray="4 3"/><line x1="546.4" y1="172" x2="546.4" y2="212" stroke="rgba(150,40,40,0.35)" stroke-width="1" stroke-dasharray="4 3"/><line x1="608.1" y1="132" x2="608.1" y2="171" stroke="rgba(20,20,90,0.1)" stroke-width="1" stroke-dasharray="4 3"/><line x1="608.1" y1="172" x2="608.1" y2="212" stroke="rgba(150,40,40,0.35)" stroke-width="1" stroke-dasharray="4 3"/><line x1="669.7" y1="132" x2="669.7" y2="171" stroke="rgba(20,20,90,0.1)" stroke-width="1" stroke-dasharray="4 3"/><line x1="669.7" y1="172" x2="669.7" y2="212" stroke="rgba(150,40,40,0.35)" stroke-width="1" stroke-dasharray="4 3"/><line x1="731.4" y1="132" x2="731.4" y2="171" stroke="rgba(20,20,90,0.1)" stroke-width="1" stroke-dasharray="4 3"/><line x1="731.4" y1="172" x2="731.4" y2="212" stroke="rgba(150,40,40,0.35)" stroke-width="1" stroke-dasharray="4 3"/><line x1="793.1" y1="132" x2="793.1" y2="171" stroke="rgba(20,20,90,0.1)" stroke-width="1" stroke-dasharray="4 3"/><line x1="793.1" y1="172" x2="793.1" y2="212" stroke="rgba(150,40,40,0.35)" stroke-width="1" stroke-dasharray="4 3"/><line x1="854.8" y1="132" x2="854.8" y2="171" stroke="rgba(20,20,90,0.1)" stroke-width="1" stroke-dasharray="4 3"/><line x1="854.8" y1="172" x2="854.8" y2="212" stroke="rgba(150,40,40,0.35)" stroke-width="1" stroke-dasharray="4 3"/><line x1="916.5" y1="132" x2="916.5" y2="171" stroke="rgba(20,20,90,0.1)" stroke-width="1" stroke-dasharray="4 3"/><line x1="916.5" y1="172" x2="916.5" y2="212" stroke="rgba(150,40,40,0.35)" stroke-width="1" stroke-dasharray="4 3"/>
 <rect x="955" y="131" width="24" height="40.5" fill="#a9a9c6"/>
 <rect x="955" y="171.5" width="24" height="41" fill="#eeeeee"/>
 <path d="M955.0 171.5 L955.0 135.2 955.5 137.1 956.0 136.6 956.5 138.2 957.0 138.7 957.5 136.4 958.0 136.6 958.5 140.8 959.0 138.6 959.5 138.9 960.0 142.7 960.5 140.8 961.0 142.9 961.5 141.8 962.0 142.9 962.5 141.3 963.0 143.8 963.5 145.2 964.0 144.3 964.5 145.6 965.0 145.8 965.5 144.1 966.0 147.2 966.5 147.1 967.0 146.6 967.5 146.3 968.0 149.6 968.5 148.9 969.0 150.3 969.5 151.4 970.0 151.5 970.5 152.7 971.0 151.9 971.5 153.7 972.0 153.5 972.5 155.4 973.0 156.1 973.5 155.1 974.0 156.1 974.5 157.3 975.0 159.7 975.5 159.9 976.0 161.4 976.5 162.3 977.0 164.2 977.5 166.3 978.0 171.5 978.5 171.5 979.0 171.5 L979.0 171.5 Z" fill="#9a9ab8"/>
 <path d="M955.0 171.5 L955.0 209.3 955.5 206.8 956.0 206.6 956.5 204.5 957.0 203.4 957.5 204.8 958.0 204.0 958.5 199.6 959.0 200.9 959.5 200.0 960.0 196.2 960.5 197.2 961.0 195.0 961.5 195.3 962.0 193.8 962.5 194.4 963.0 192.1 963.5 190.5 964.0 190.6 964.5 189.2 965.0 188.5 965.5 189.0 966.0 186.6 966.5 186.1 967.0 185.9 967.5 185.5 968.0 183.2 968.5 183.1 969.0 182.0 969.5 181.0 970.0 180.5 970.5 179.5 971.0 179.4 971.5 178.3 972.0 177.9 972.5 176.8 973.0 176.3 973.5 176.1 974.0 175.4 974.5 174.8 975.0 173.9 975.5 173.6 976.0 173.0 976.5 172.6 977.0 172.1 977.5 171.8 978.0 171.5 978.5 171.5 979.0 171.5 L979.0 171.5 Z" fill="#c8c8c8"/>
 
 <line x1="485" y1="130.8" x2="979" y2="130.8" stroke="#1a1a78" stroke-width="1.6"/>
 <line x1="485" y1="171.5" x2="979" y2="171.5" stroke="#1a1a78" stroke-width="2"/>
 <line x1="485" y1="212.5" x2="979" y2="212.5" stroke="#a0a0a0" stroke-width="1.5"/>
 <line x1="485" y1="131" x2="485" y2="213" stroke="#2020d0" stroke-width="2.2"/>
 <line x1="979" y1="131" x2="979" y2="213" stroke="#2020d0" stroke-width="2.2"/>
 <path d="M950 213 L960 213 L955 219 Z" fill="#a0a0a8"/>
 <circle cx="485" cy="131" r="5" fill="#6a70b8" stroke="#303070"/>
 <circle cx="485" cy="171.5" r="5" fill="#6a70b8" stroke="#303070"/>
 <circle cx="979" cy="131" r="5" fill="#6a70b8" stroke="#303070"/>
 <circle cx="979" cy="171.5" r="5" fill="#6a70b8" stroke="#303070"/>
 <path d="M485 174 L494.5 182 L485 190 Z" fill="#7890f0" stroke="#3040d0" stroke-width="1"/>
 <path d="M979 174 L988.5 182 L979 190 Z" fill="#7890f0" stroke="#3040d0" stroke-width="1"/>
</svg>
<div class="t" style="left:485px;top:217px;font-size:11.5px;font-weight:bold;color:#404040">00:00</div><div class="t" style="left:546.4px;top:217px;width:40px;margin-left:-20px;text-align:center;font-size:11.5px;font-weight:bold;color:#404040">00:25</div><div class="t" style="left:608.1px;top:217px;width:40px;margin-left:-20px;text-align:center;font-size:11.5px;font-weight:bold;color:#404040">00:50</div><div class="t" style="left:669.7px;top:217px;width:40px;margin-left:-20px;text-align:center;font-size:11.5px;font-weight:bold;color:#404040">01:15</div><div class="t" style="left:731.4px;top:217px;width:40px;margin-left:-20px;text-align:center;font-size:11.5px;font-weight:bold;color:#404040">01:40</div><div class="t" style="left:793.1px;top:217px;width:40px;margin-left:-20px;text-align:center;font-size:11.5px;font-weight:bold;color:#404040">02:05</div><div class="t" style="left:854.8px;top:217px;width:40px;margin-left:-20px;text-align:center;font-size:11.5px;font-weight:bold;color:#404040">02:30</div><div class="t" style="left:916.5px;top:217px;width:40px;margin-left:-20px;text-align:center;font-size:11.5px;font-weight:bold;color:#404040">02:55</div><div class="t" style="left:949px;top:217px;font-size:11.5px;font-weight:bold;color:#404040">03:20</div>

<!-- tabs -->
<div class="a" style="left:90px;top:236px;width:271px;height:28px;background:#ececec;border:1px solid #d9d9d9;border-bottom:none"></div>
<div class="vs" style="left:183px;top:236px;height:28px;background:#d9d9d9"></div>
<div class="vs" style="left:271px;top:236px;height:28px;background:#d9d9d9"></div>
<div class="a" style="left:4px;top:232px;width:87px;height:34px;background:#fbfbfb;border:1px solid #d9d9d9;border-bottom:none"></div>
<div class="a" style="left:6px;top:236px;width:82px;height:27px;border:1px dotted #404040"></div>
<svg class="a" style="left:0;top:230px" width="370" height="40">
 <defs><linearGradient id="gg" x1="0" y1="0" x2="0" y2="1"><stop offset="0" stop-color="#3ee03e"/><stop offset="1" stop-color="#08a008"/></linearGradient>
 <linearGradient id="cab" x1="0" y1="0" x2="0" y2="1"><stop offset="0" stop-color="#e8c080"/><stop offset="1" stop-color="#b88040"/></linearGradient></defs>
 <rect x="14" y="8.5" width="20" height="18" rx="2.5" fill="url(#gg)" stroke="#1a8a1a" stroke-width="0.8"/>
 <path d="M20.5 12 L28.5 17.5 L20.5 23 Z" fill="#d8ffd8"/>
 <rect x="101.5" y="11.5" width="13" height="16" fill="#f4f8fc" stroke="#b0b8c8"/>
 <path d="M104.5 16.5h7M104.5 20h7M104.5 23.5h7" stroke="#b0cce8" stroke-width="1.6"/>
 <path d="M204 10.5 L204 26.5" stroke="#4050d0" stroke-width="1.8"/>
 <ellipse cx="201.5" cy="27" rx="3.3" ry="2.6" fill="#3848d8" transform="rotate(-20 201.5 27)"/>
 <path d="M204 13 Q206 16 209 18 L209.5 23.5" stroke="#4a58d8" stroke-width="1.5" fill="none"/>
 <rect x="281" y="7.6" width="21.5" height="24.8" rx="2" fill="url(#cab)" stroke="#b88040" stroke-width="0.8"/>
 <rect x="283.5" y="10" width="16.5" height="10" fill="#e0b470"/>
 <rect x="287" y="15" width="9" height="1.6" rx="0.8" fill="#fff2b0"/>
 <rect x="283" y="20" width="17.5" height="3.2" fill="#7a3a20"/>
 <rect x="283.5" y="23.2" width="16.5" height="7.5" fill="#e8b878"/>
 <rect x="287" y="26" width="9" height="1.6" rx="0.8" fill="#fff0c0"/>
</svg>
<div class="t" style="left:43px;top:242px;font-size:13px;color:#1a1a2a">Player</div>
<div class="t" style="left:128px;top:243px;font-size:13px;color:#1a1a2a">Playlists</div>
<div class="t" style="left:224px;top:243px;font-size:13px;color:#1a1a2a">Jingles</div>
<div class="t" style="left:311px;top:243px;font-size:13px;color:#1a1a2a">Archive</div>

<!-- left panel -->
<div class="hdr" style="left:8px;top:270px;width:499px;height:30px;line-height:28px">Play line</div>
<div class="box" style="left:8px;top:304px;width:498px;height:36px"></div>
<div class="box" style="left:8px;top:344px;width:498px;height:323px;background:#fff;border-color:#a0a0a0"></div>


<!-- left toolbar icons -->
<svg class="a" style="left:0;top:300px" width="510" height="45">
 <defs>
  <linearGradient id="fold" x1="0" y1="0" x2="0" y2="1"><stop offset="0" stop-color="#fff8a0"/><stop offset="1" stop-color="#f0a010"/></linearGradient>
  <radialGradient id="clk" cx="0.45" cy="0.4" r="0.6"><stop offset="0" stop-color="#e8f6ff"/><stop offset="1" stop-color="#a8d0f0"/></radialGradient>
  <linearGradient id="bub" x1="0" y1="0" x2="0" y2="1"><stop offset="0" stop-color="#60c0f8"/><stop offset="1" stop-color="#2080d8"/></linearGradient>
  <linearGradient id="hp" x1="0" y1="0" x2="1" y2="0"><stop offset="0" stop-color="#404040"/><stop offset="0.5" stop-color="#a0a0a0"/><stop offset="1" stop-color="#404040"/></linearGradient>
 </defs>
 <path d="M25.7 15h4v5.7h5.7v4h-5.7v5.7h-4v-5.7h-5.7v-4h5.7z" fill="#2a5ee8"/>
 <path d="M48.5 20 L58 20 L53.2 25 Z" fill="#181818"/>
 <path d="M75 12 L90 11.5 L90.5 30 L76 31 Z" fill="#fff4b8" stroke="#d8b040" stroke-width="0.8"/>
 <path d="M67 18.5 L85 16.5 L89 31.5 L71 33.5 Z" fill="url(#fold)" stroke="#d89a20" stroke-width="0.8"/>
 <path d="M78.2 13.5h4v6h6v4h-6v6h-4v-6h-6v-4h6z" fill="#2a5ae0"/>
 <rect x="99" y="9" width="1.3" height="27" fill="#707070"/>
 <rect x="114" y="20" width="15" height="5" rx="1" fill="#e03828"/>
 <rect x="145" y="12.5" width="20" height="20" rx="1.5" fill="#2c6aa0"/>
 <rect x="148" y="13" width="14" height="7" fill="#b8b8b8"/>
 <rect x="147.5" y="20" width="15" height="5" fill="#e84030"/>
 <rect x="147.5" y="25" width="15" height="5" fill="#ffffff"/>
 <path d="M181 15 L197 31 M197 15 L181 31" stroke="#e02020" stroke-width="4"/>
 <rect x="209" y="9" width="1.3" height="27" fill="#707070"/>
 <rect x="221.5" y="14.5" width="15" height="17" fill="#fff" stroke="#a8a8b8"/>
 <path d="M226 30 L241 13 L244 16 L229 31 Z" fill="#58c838" stroke="#389828" stroke-width="0.6"/>
 <path d="M240 12 L243 10 L246 13 L244 16 Z" fill="#d86040"/>
 <rect x="251.5" y="9" width="1.3" height="27" fill="#707070"/>
 <path d="M267 26 Q267 12.5 275 12.5 Q283 12.5 283 26" stroke="#505050" stroke-width="2.2" fill="none"/>
 <rect x="264.5" y="22" width="5" height="9" rx="2.5" fill="url(#hp)"/>
 <rect x="280.5" y="22" width="5" height="9" rx="2.5" fill="url(#hp)"/>
 <path d="M298 12 Q298 11 299 11 L320 11 Q321 11 321 12 L321 27 Q321 28 320 28 L313 28 L310 34 L307 28 L299 28 Q298 28 298 27 Z" fill="url(#bub)"/>
 <path d="M305 14.5h9v3h-3v8h-3v-8h-3z" fill="#fff"/>
 <rect x="329" y="9" width="1.3" height="27" fill="#707070"/>
 <circle cx="352.5" cy="22" r="10.5" fill="url(#clk)" stroke="#607080" stroke-width="1.3"/>
 <path d="M349 19 L352.5 23 L356 19" stroke="#303030" stroke-width="2" fill="none"/>
 <path d="M352.5 23 L352.5 26" stroke="#303030" stroke-width="1.6"/>
 <path d="M377.50 19.0 L377.50 25.0 M378.95 17.0 L378.95 27.0 M380.40 11.0 L380.40 33.0 M381.85 15.0 L381.85 29.0 M383.30 18.0 L383.30 26.0 M384.75 16.0 L384.75 28.0 M386.20 13.0 L386.20 31.0 M387.65 17.0 L387.65 27.0 M389.10 19.0 L389.10 25.0 M390.55 16.0 L390.55 28.0 M392.00 11.0 L392.00 33.0 M393.45 14.0 L393.45 30.0 M394.90 17.0 L394.90 27.0 M396.35 19.0 L396.35 25.0 M397.80 20.0 L397.80 24.0 " stroke="#f05050" stroke-width="0.9" opacity="0.9"/><path d="M377.50 20.4 L377.50 22.6 M378.95 19.2 L378.95 23.0 M380.40 15.9 L380.40 24.2 M381.85 18.1 L381.85 23.4 M383.30 19.8 L383.30 22.8 M384.75 18.7 L384.75 23.2 M386.20 17.1 L386.20 23.8 M387.65 19.2 L387.65 23.0 M389.10 20.4 L389.10 22.6 M390.55 18.7 L390.55 23.2 M392.00 15.9 L392.00 24.2 M393.45 17.6 L393.45 23.6 M394.90 19.2 L394.90 23.0 M396.35 20.4 L396.35 22.6 M397.80 20.9 L397.80 22.4 " stroke="#6a5ae0" stroke-width="0.9"/><path d="M375 22.5 L399 22.5" stroke="#4a68d8" stroke-width="1.6"/>
 <g transform="translate(420 22) rotate(-45)"><rect x="-10" y="-4.5" width="20" height="9" rx="2.5" fill="#e0e0e0" stroke="#b0b0b0" stroke-width="0.8"/><path d="M2 -4.5 L7.5 -4.5 Q10 -4.5 10 -2 L10 2 Q10 4.5 7.5 4.5 L2 4.5 Z" fill="#ec5878"/></g>
 <rect x="440" y="9" width="1.3" height="27" fill="#707070"/>
 <rect x="453.5" y="11.5" width="12" height="15" fill="#f8fbff" stroke="#b8c8d8"/>
 <path d="M455 15h9M455 18h9M455 21h9" stroke="#a8c4e8"/>
 <rect x="459.5" y="16.5" width="12" height="15" fill="#f8fbff" stroke="#b8c8d8"/>
 <path d="M461 20h9M461 23h9M461 26h9" stroke="#a8c4e8"/>
 <path d="M490 20 L501 20 L495.5 25.5 Z" fill="#101010"/>
</svg>

<!-- list header -->
<div class="vs" style="left:103px;top:345px;height:30px;background:#e5e5e5"></div>
<div class="vs" style="left:140px;top:345px;height:30px;background:#e5e5e5"></div>
<div class="vs" style="left:178px;top:345px;height:30px;background:#e5e5e5"></div>
<div class="vs" style="left:216px;top:345px;height:30px;background:#e5e5e5"></div>
<div class="vs" style="left:465px;top:345px;height:30px;background:#e5e5e5"></div>
<div class="t" style="left:18px;top:354px;font-size:13.5px;color:#222">#</div>
<div class="t" style="left:117px;top:354px;font-size:13.5px;color:#222">T</div>
<div class="t" style="left:148px;top:354px;font-size:13.5px;color:#222;font-style:italic">N…</div>
<div class="t" style="left:186px;top:354px;font-size:13.5px;color:#222">Tag</div>
<div class="t" style="left:222px;top:354px;font-size:13.5px;color:#222">Title</div>
<!-- rows -->
<div class="a" style="left:9px;top:377px;width:495px;height:21px;background:#e6fbe6"></div>
<div class="a" style="left:104px;top:376px;width:36px;height:67px;background:#aaf8ff"></div>
<div class="dh" style="left:10px;top:376px;width:493px"></div><div class="dh" style="left:10px;top:397px;width:493px"></div><div class="dv" style="left:10px;top:376px;height:22px"></div>
<svg class="a" style="left:0;top:370px" width="200" height="30"><path d="M18 9 L32 17 L18 25 Z" fill="#10b010"/>
 <path d="M151 17 L152 14.5 L154.5 14 L155.5 11.5 L156.5 14 L158.5 14.5 L160.5 13.5 L161.5 11 L162.5 13.5 L164.5 14.5 L166 17 Z" fill="#7a6ee0"/><path d="M151 17 L152 19.5 L154.5 20 L155.5 22 L156.5 20 L158.5 19.5 L160.5 20.5 L161.5 22.5 L162.5 20.5 L164.5 19.5 L166 17 Z" fill="#f07a7a"/></svg>
<div class="t" style="left:85px;top:380px;font-size:13px;font-weight:bold;color:#111">1</div>
<div class="t" style="left:86px;top:402px;font-size:13px;color:#222">2</div>
<div class="t" style="left:86px;top:425px;font-size:13px;color:#222">3</div>
<div class="t" style="left:186px;top:382px;font-size:9px;font-weight:bold;color:#222">TAG</div>
<div class="t" style="left:186px;top:405px;font-size:9px;font-weight:bold;color:#222">TAG</div>
<div class="t" style="left:186px;top:428px;font-size:9px;font-weight:bold;color:#222">TAG</div>
<div class="t" style="left:221px;top:380px;font-size:14px;font-weight:bold;color:#111;letter-spacing:0.3px;-webkit-text-stroke:0.3px #111">Edwin Starr - War</div>
<div class="a" style="left:220px;top:400px;width:236px;height:45px;overflow:hidden">
 <div class="t" style="left:0;top:2px;font-size:14px;color:#222;transform:scaleX(0.95);transform-origin:0 0">Elvis Presley - A Little Less Conversation</div>
 <div class="t" style="left:0;top:25px;font-size:14px;color:#222;transform:scaleX(0.95);transform-origin:0 0">Elvis Presley &nbsp;JXL - A Little Less Conversation</div>
</div>
<!-- scrollbar -->
<div class="a" style="left:9px;top:645px;width:496px;height:19px;background:#f0f0f0"></div>
<div class="a" style="left:31px;top:645px;width:233px;height:19px;background:#cdcdcd"></div>
<svg class="a" style="left:0;top:640px" width="510" height="25"><path d="M23 10 L18 14.5 L23 19" stroke="#606060" stroke-width="2" fill="none"/><path d="M491 10 L496 14.5 L491 19" stroke="#606060" stroke-width="2" fill="none"/></svg>

<!-- bottom toolbars -->
<div class="box" style="left:8px;top:671px;width:276px;height:36px"></div>
<div class="box" style="left:285px;top:671px;width:221px;height:36px"></div>
<svg class="a" style="left:0;top:665px" width="510" height="45">
 <defs>
  <linearGradient id="gb" x1="0" y1="0" x2="0" y2="1"><stop offset="0" stop-color="#40e040"/><stop offset="1" stop-color="#10a010"/></linearGradient>
  <linearGradient id="kb" x1="0" y1="0" x2="0" y2="1"><stop offset="0" stop-color="#808080"/><stop offset="1" stop-color="#404040"/></linearGradient>
  <linearGradient id="pb" x1="0" y1="0" x2="0" y2="1"><stop offset="0" stop-color="#e070e0"/><stop offset="1" stop-color="#9020a0"/></linearGradient>
 </defs>
 <g transform="translate(29.5 25) rotate(-45)"><rect x="-10" y="-4.5" width="20" height="9" rx="2.5" fill="#e4e4e4" stroke="#a8a8a8" stroke-width="0.8"/><path d="M3 -4.5 L7.5 -4.5 Q10 -4.5 10 -2 L10 2 Q10 4.5 7.5 4.5 L3 4.5 Z" fill="#e87060"/></g>
 <rect x="50" y="11" width="1.3" height="29" fill="#707070"/>
 <rect x="65" y="16" width="17.5" height="18" rx="2" fill="url(#gb)" stroke="#108010" stroke-width="0.6"/>
 <path d="M70 31 L75 26 M71.5 26 L70 31 L75 29.5" stroke="#fff" stroke-width="1.6" fill="none"/><path d="M78 19 L73 24 M76.5 24 L78 19 L73 20.5" stroke="#fff" stroke-width="1.6" fill="none"/><path d="M69 22 Q69 18 73 18 M79 28 Q79 32 75 32" stroke="#e0ffe0" stroke-width="1.2" fill="none"/>
 <rect x="102" y="16" width="17.5" height="18" rx="2" fill="url(#gb)" stroke="#108010" stroke-width="0.6"/>
 <path d="M106 30 L106 25 L111 30 Z M108 28 Q112 22 116 22" stroke="#fff" stroke-width="1.8" fill="#fff"/>
 <rect x="140" y="16" width="17.5" height="18" rx="2" fill="url(#gb)" stroke="#108010" stroke-width="0.6"/>
 <path d="M144 20 L149 20 L144 25 Z M146 22 Q150 28 154 28" stroke="#fff" stroke-width="1.8" fill="#fff"/>
 <rect x="177" y="16" width="18" height="18" rx="2.5" fill="url(#kb)" stroke="#303030" stroke-width="0.6"/>
 <rect x="182" y="20.5" width="3" height="9" fill="#e8e8e8"/><rect x="187" y="20.5" width="3" height="9" fill="#e8e8e8"/>
 <rect x="215" y="16" width="18" height="18" rx="2.5" fill="url(#kb)" stroke="#303030" stroke-width="0.6"/>
 <rect x="219.5" y="20.5" width="9" height="9" fill="#e8e8e8"/>
 <rect x="253" y="16" width="17.5" height="18" rx="2" fill="url(#pb)" stroke="#801080" stroke-width="0.6"/>
 <path d="M258 26 L258 22.5 Q258 19 261.75 19 Q265.5 19 265.5 22.5 L265.5 26" stroke="#fff" stroke-width="1.6" fill="none"/>
 <rect x="256.5" y="25" width="10.5" height="6.5" fill="#fff"/>
 <path d="M301 16.5 L311 25 L301 33.5" stroke="#e01828" stroke-width="3.5" fill="none"/>
 <path d="M337 29 L344 22 L351 29" stroke="#2070d0" stroke-width="3.5" fill="none"/>
 <rect x="372" y="16" width="18" height="3" fill="#303030"/>
 <path d="M373 31 L381 23 L389 31" stroke="#707070" stroke-width="3.5" fill="none"/>
 <path d="M411 23 L418.5 30 L426 23" stroke="#3080e0" stroke-width="3.5" fill="none"/>
 <rect x="440" y="11" width="1.3" height="29" fill="#707070"/>
 <path d="M458 17 L462 17 L462 26 L466 26 L460 34 L454 26 L458 26 Z" fill="#4890e0"/>
 <text x="467" y="24" font-family="Liberation Sans" font-weight="bold" font-size="9" fill="#202020">A</text>
 <text x="467" y="34" font-family="Liberation Sans" font-weight="bold" font-size="9" fill="#202020">Z</text>
 <path d="M486 24 L494 24 L490 28.5 Z" fill="#181818"/>
</svg>
<!-- status -->
<div class="vs" style="left:157px;top:715px;height:26px"></div>
<div class="vs" style="left:227px;top:715px;height:26px"></div>
<div class="vs" style="left:335px;top:715px;height:26px"></div>
<div class="vs" style="left:404px;top:715px;height:26px"></div>
<div class="t" style="left:184px;top:719px;font-size:14px;font-weight:bold;color:#1a7ad0">0</div>
<div class="t" style="left:258px;top:719px;font-size:14px;font-weight:bold;color:#1a7ad0;letter-spacing:0.8px">00:00</div>
<div class="t" style="left:364px;top:719px;font-size:14px;font-weight:bold;color:#181818">3</div>
<div class="t" style="left:435px;top:719px;font-size:14px;font-weight:bold;color:#181818;letter-spacing:0.8px">09:02</div>


<!-- right panel -->
<div class="hdr" style="left:519px;top:270px;width:471px;height:30px;line-height:28px">Next file</div>
<div class="a" style="left:519px;top:304px;width:469px;height:37px;background:#abfafc"></div>
<div class="vs" style="left:900px;top:304px;height:37px;background:#a0a0a0"></div>
<svg class="a" style="left:519px;top:304px" width="40" height="37"><path d="M10 9.5 L20 18.5 L10 27.5 Z M20 9.5 L30 18.5 L20 27.5 Z" fill="#3068e0"/></svg>
<div class="t" style="left:560px;top:314px;font-size:14px;font-weight:bold;color:#111;letter-spacing:0.2px;-webkit-text-stroke:0.3px #111">Elvis Presley - A Little Less Conversation</div>
<div class="t" style="left:921px;top:314px;font-size:16px;font-weight:bold;color:#111;letter-spacing:1.1px;-webkit-text-stroke:0.35px #111">02:13</div>
<div class="hdr" style="left:519px;top:345px;width:471px;height:30px;line-height:28px">Over file</div>
<div class="vs" style="left:773px;top:377px;height:37px"></div>
<div class="vs" style="left:860px;top:377px;height:37px"></div>
<div class="vs" style="left:948px;top:377px;height:37px"></div>
<svg class="a" style="left:519px;top:375px" width="472" height="40">
 <circle cx="18.5" cy="18.5" r="12.5" fill="#e02048"/>
 <path d="M12 16 L15 16 L19 12.5 L19 24.5 L15 21 L12 21 Z" fill="#fff"/>
 <path d="M21.5 15.5 Q23.5 18.5 21.5 21.5" stroke="#f8a0b0" stroke-width="1" fill="none"/>
 <rect x="436" y="5" width="30" height="27" fill="#c8c8c8"/>
 <rect x="442" y="10" width="18" height="17" fill="#a8a8a8" stroke="#b8b8b8"/>
</svg>
<div class="hdr" style="left:519px;top:417px;width:471px;height:29px;line-height:27px">Autojingles</div>
<svg class="a" style="left:519px;top:450px" width="40" height="30">
 <defs><linearGradient id="bell" x1="0" y1="0" x2="1" y2="0"><stop offset="0" stop-color="#f0c000"/><stop offset="0.45" stop-color="#fff27a"/><stop offset="1" stop-color="#d89a00"/></linearGradient></defs>
 <g transform="translate(18.5 15) rotate(-45)">
  <path d="M-2 -9.5 Q0 -11 2 -9.5 Q6.5 -7.5 6.5 -1 Q6.5 4 10 7.5 Q0 9.5 -10 7.5 Q-6.5 4 -6.5 -1 Q-6.5 -7.5 -2 -9.5 Z" fill="url(#bell)" stroke="#c89000" stroke-width="0.8"/>
  <circle cx="0" cy="9.5" r="2" fill="#f0d040" stroke="#c89000" stroke-width="0.6"/>
 </g>
</svg>
<div class="t" style="left:754px;top:457px;font-size:14px;font-weight:bold;color:#111">None</div>
<div class="hdr" style="left:519px;top:488px;width:471px;height:29px;line-height:27px">Playlists</div>
<div class="box" style="left:519px;top:522px;width:470px;height:35px"></div>
<svg class="a" style="left:519px;top:520px" width="200" height="40">
 <defs><linearGradient id="rf" x1="0" y1="0" x2="1" y2="1"><stop offset="0" stop-color="#80c8f8"/><stop offset="1" stop-color="#2878d8"/></linearGradient></defs>
 <path d="M10.5 19.5 L16 25.5 L27.5 13" stroke="#2070d0" stroke-width="4" fill="none"/>
 <rect x="39" y="8" width="1.3" height="28" fill="#707070"/>
 <rect x="54.5" y="14.5" width="15" height="17" fill="#fff" stroke="#a8a8b8"/>
 <path d="M59 30 L73 14 L76 17 L62 32 Z" fill="#58c838" stroke="#389828" stroke-width="0.6"/>
 <path d="M72 13 L75 11 L78 14 L76 17 Z" fill="#d86040"/>
 <rect x="85" y="8" width="1.3" height="28" fill="#707070"/>
 <path d="M100 22 Q99 13 108 13 L108 10 L113 15 L108 20 L108 17 Q103 17 104 22 Z" fill="url(#rf)"/>
 <path d="M117 22 Q118 31 109 31 L109 34 L104 29 L109 24 L109 27 Q114 27 113 22 Z" fill="url(#rf)"/>
 <rect x="129" y="8" width="1.3" height="28" fill="#707070"/>
 <circle cx="148" cy="17" r="5.5" fill="#d8f0ff" stroke="#60a0d8" stroke-width="1.8"/>
 <path d="M152 21 L159 28" stroke="#e08030" stroke-width="3"/>
</svg>
<!-- playlists list -->
<div class="box" style="left:519px;top:562px;width:471px;height:179px;background:#fff"></div>
<div class="vs" style="left:583px;top:563px;height:30px;background:#e5e5e5"></div>
<div class="vs" style="left:707px;top:563px;height:30px;background:#e5e5e5"></div>
<div class="vs" style="left:833px;top:563px;height:30px;background:#e5e5e5"></div>
<div class="t" style="left:529px;top:571px;font-size:13px;color:#222">#</div>
<div class="t" style="left:600px;top:571px;width:100px;text-align:right;font-size:13.5px;color:#222">Start</div>
<div class="t" style="left:725px;top:571px;width:100px;text-align:right;font-size:13.5px;color:#222">Executed</div>
<div class="t" style="left:841px;top:571px;font-size:13.5px;color:#222">Title</div>
<div class="a" style="left:520px;top:594px;width:64px;height:22px;background:#dde5ee"></div>
<div class="a" style="left:584px;top:594px;width:403px;height:22px;background:#e2d9ec"></div>
<div class="a" style="left:584px;top:616px;width:403px;height:22px;background:#ffdcfe"></div>
<div class="dh" style="left:521px;top:594px;width:466px;height:1px;background:repeating-linear-gradient(90deg,#3580c0 0 3.5px,transparent 3.5px 6.2px)"></div><div class="dh" style="left:521px;top:615px;width:466px;height:1px;background:repeating-linear-gradient(90deg,#3580c0 0 3.5px,transparent 3.5px 6.2px)"></div><div class="dv" style="left:521px;top:594px;height:22px;width:1px;background:repeating-linear-gradient(180deg,#3580c0 0 3.5px,transparent 3.5px 6.2px)"></div>
<div class="t" style="left:566px;top:597px;font-size:13.5px;color:#3a8e3a">1</div>
<div class="t" style="left:566px;top:620px;font-size:13.5px;color:#3a8e3a">2</div>
<div class="t" style="left:643px;top:597px;font-size:13.5px;color:#3a8e3a;letter-spacing:0.4px">09:30:00</div>
<div class="t" style="left:643px;top:620px;font-size:13.5px;color:#3a8e3a;letter-spacing:0.4px">10:00:00</div>
<div class="t" style="left:838px;top:597px;font-size:13.5px;color:#3a8e3a">Mid hour</div>
<div class="t" style="left:838px;top:620px;font-size:13.5px;color:#3a8e3a">Start</div>
<div class="a" style="left:520px;top:718px;width:469px;height:19px;background:#f0f0f0"></div>
<div class="a" style="left:542px;top:718px;width:255px;height:19px;background:#c1c1c1"></div>
<svg class="a" style="left:510px;top:715px" width="490" height="25"><path d="M24 8 L19 12.5 L24 17" stroke="#606060" stroke-width="2" fill="none"/><path d="M466 8 L471 12.5 L466 17" stroke="#606060" stroke-width="2" fill="none"/></svg>

</body></html>
